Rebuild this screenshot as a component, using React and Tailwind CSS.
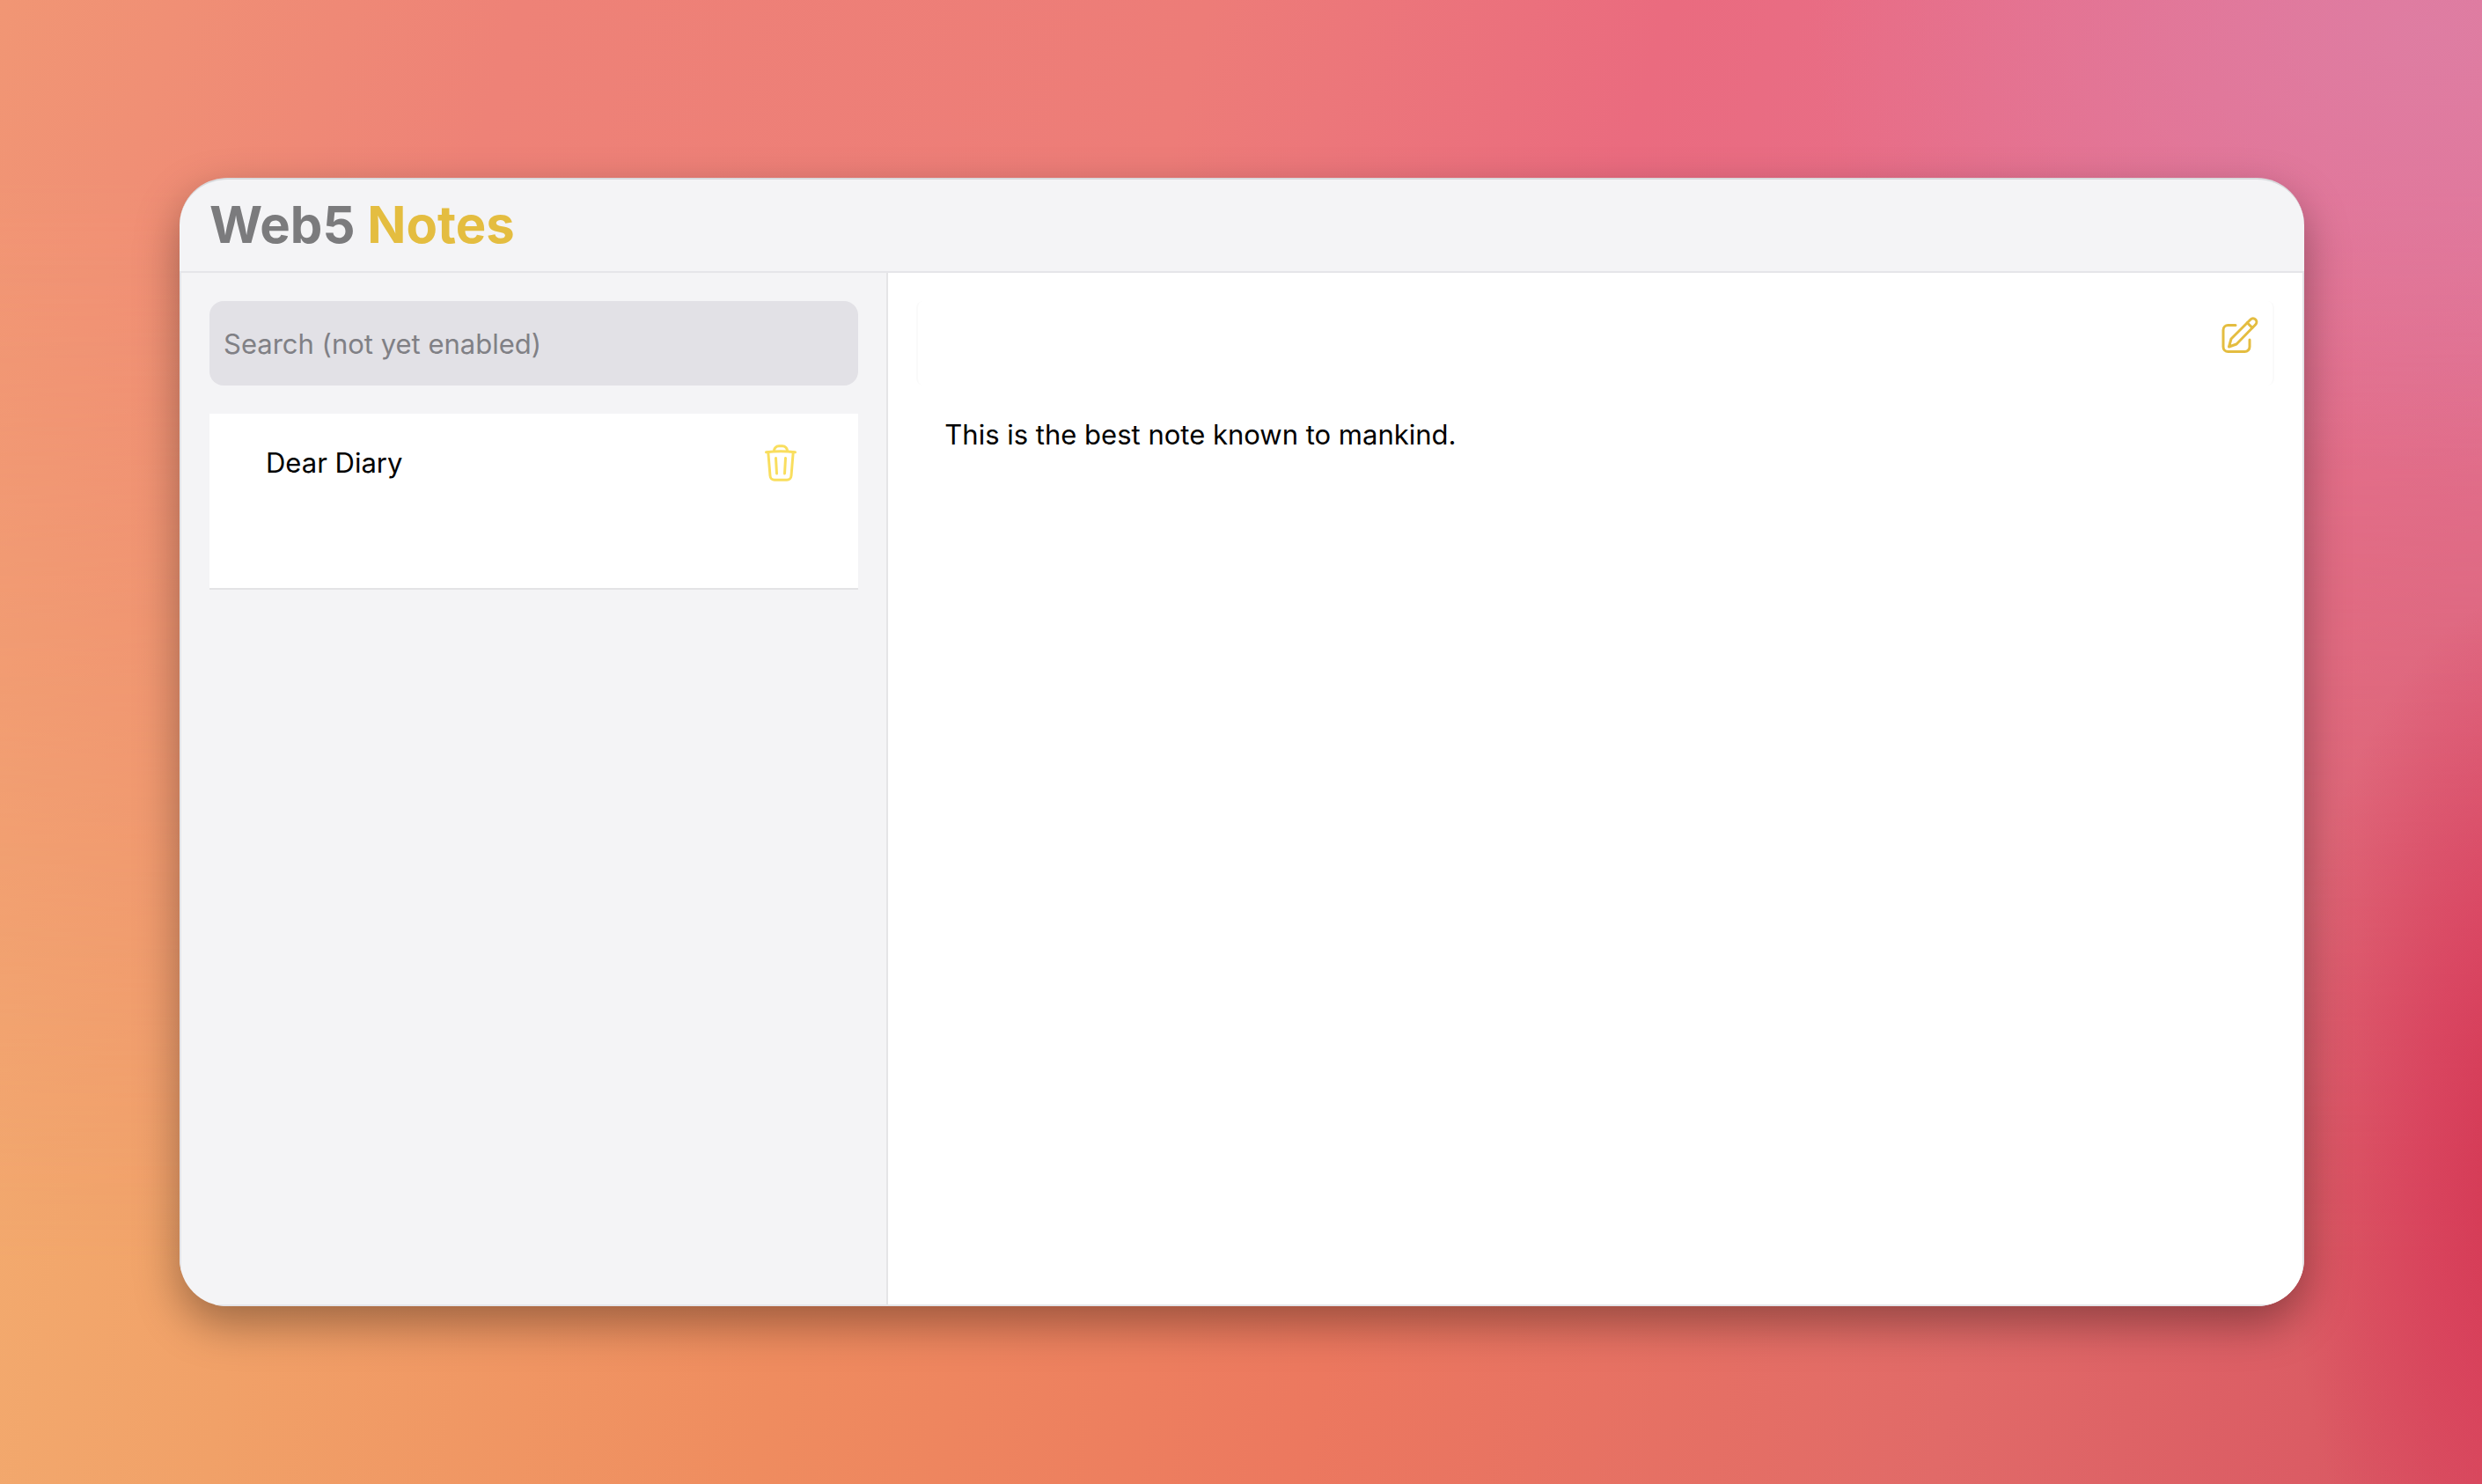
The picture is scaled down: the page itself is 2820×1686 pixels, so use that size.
function EditIcon() {
  return (
    <svg viewBox="0 0 48 48" className="size-12" fill="none" stroke="currentColor" strokeWidth="3" strokeLinecap="round" strokeLinejoin="round" aria-hidden="true">
      <path d="M20 13.500H11.500a5.500 5.500 0 0 0-5.500 5.500V38a5.500 5.500 0 0 0 5.500 5.500H30.500a5.500 5.500 0 0 0 5.500-5.500V30" />
      <path d="M12.500 38l2.500-9L37 7a4 4 0 0 1 5.700 5.700L21 35z" />
      <path d="M33.300 10.700l5.700 5.700" />
    </svg>
  );
}

function TrashIcon() {
  return (
    <svg viewBox="0 0 48 48" className="size-12" fill="none" stroke="currentColor" strokeWidth="3" strokeLinecap="round" strokeLinejoin="round" aria-hidden="true">
      <path d="M7.500 11.800q16.500-2 33 0" />
      <path d="M9.800 12L12 38.500a5 5 0 0 0 5 4.700H31a5 5 0 0 0 5-4.700L38.200 12" />
      <path d="M16.500 10.500a5.500 5.500 0 0 1 5.500-5.700h4a5.500 5.500 0 0 1 5.500 5.700" />
      <path d="M18.500 18.500l1 17.500M29.500 18.500l-1 17.500" />
    </svg>
  );
}

export default function App() {
  return (
    <div className="relative isolate flex min-h-screen bg-[linear-gradient(100deg,#f4b072_0%,#f1a168_17%,#ef8c5f_37%,#ec785f_57%,#e16a68_80%,#d85562_100%)] pr-[202px] pl-[204px] py-[202px] font-['Inter',sans-serif] text-[31px] leading-12 text-black before:absolute before:inset-0 before:-z-20 before:bg-[linear-gradient(105deg,#f19674_0%,#ee8277_18%,#ed7c78_42%,#ea6b7f_58%,#e57090_78%,#e0759c_100%)] before:mask-[linear-gradient(to_bottom,black_0%,black_12%,transparent_85%)] after:absolute after:inset-0 after:-z-10 after:bg-[radial-gradient(ellipse_10%_38%_at_102%_78%,#d2304fd9_0%,#d8365899_45%,transparent_100%),radial-gradient(ellipse_25%_30%_at_98%_2%,#dd80a6cc_0%,transparent_100%)]">
      <div className="flex min-w-0 flex-1 flex-col overflow-hidden rounded-[54px] border-t-2 border-[#d9dadd] bg-[#f4f4f6] shadow-[0_20px_50px_rgba(0,0,0,0.35)]">
        <header className="border-b-2 border-[#e5e5e9] px-[34px] pt-3 pb-3.5">
          <h1 className="text-[58px] leading-[78px] font-bold text-[#7b7b7d]">
            Web5 <span className="text-[#e4bd40]">Notes</span>
          </h1>
        </header>
        <div className="flex flex-1 border-x-2 border-b-2 border-[#e5e5e9]">
          <aside className="flex w-1/3 flex-col gap-8 border-r-2 border-[#e5e5e7] p-8">
            <input type="search" aria-label="Search notes" placeholder="Search (not yet enabled)" className="h-24 w-full rounded-2xl bg-[#e2e1e6] px-4 placeholder:text-[#808085]" />
            <article className="flex h-[200px] items-start justify-between border-b-2 border-[#e3e3e5] bg-white px-16 py-8">
              <h2>Dear Diary</h2>
              <button type="button" aria-label="Delete note" className="text-[#f9de5e]">
                <TrashIcon />
              </button>
            </article>
          </aside>
          <main className="flex min-w-0 flex-1 flex-col bg-white p-8">
            <div className="flex h-24 items-start justify-end rounded-lg border-x-2 border-[#fafafa] p-3.5">
              <button type="button" aria-label="New note" className="text-[#e4bd40]">
                <EditIcon />
              </button>
            </div>
            <textarea aria-label="Note text" defaultValue="This is the best note known to mankind." className="w-full flex-1 resize-none px-8 pt-8 outline-none" />
          </main>
        </div>
      </div>
    </div>
  );
}
